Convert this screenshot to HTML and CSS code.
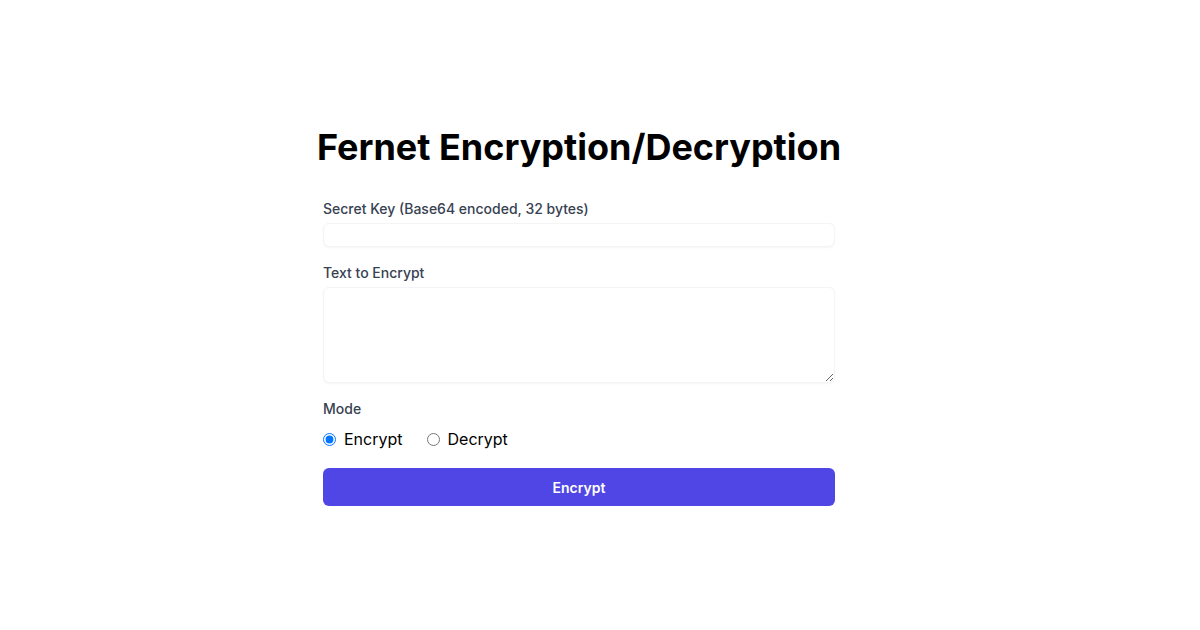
FILE: index.html
```html
<!DOCTYPE html>
<html>
<head>
<meta charset="utf-8">
<link rel="stylesheet" href="styles.css">
</head>
<body>
<main class="page">
  <div class="card">
    <h1 class="title">Fernet Encryption/Decryption</h1>
    <form class="form">
      <div class="field">
        <label class="label" for="key">Secret Key (Base64 encoded, 32 bytes)</label>
        <input class="input" id="key" type="text">
      </div>
      <div class="field">
        <label class="label" for="text">Text to Encrypt</label>
        <textarea class="textarea" id="text"></textarea>
      </div>
      <div class="field">
        <span class="label">Mode</span>
        <div class="radios">
          <label class="radio"><input type="radio" name="mode" checked><span>Encrypt</span></label>
          <label class="radio"><input type="radio" name="mode"><span>Decrypt</span></label>
        </div>
      </div>
      <button class="button" type="button">Encrypt</button>
    </form>
  </div>
</main>
</body>
</html>
```

FILE: styles.css
```css
* { box-sizing: border-box; }
html, body { margin: 0; padding: 0; background: #ffffff; }
body { font-family: Inter, "Noto Sans", sans-serif; }
.page {
  min-height: 630px;
  display: flex;
  justify-content: center;
  align-items: flex-start;
  padding: 127px 42px 0 0;
}
.card {
  width: 512px;
  display: flex;
  flex-direction: column;
}
.title {
  font-family: Inter, "Noto Sans", sans-serif;
  font-size: 36px;
  line-height: 40px;
  font-weight: 700;
  color: #000;
  margin: 0 -30px 32px -30px;
  text-align: center;
  white-space: nowrap;
}
.form { display: flex; flex-direction: column; gap: 16px; margin: 0; }
.field { display: flex; flex-direction: column; }
.label {
  font-size: 14px;
  line-height: 20px;
  font-weight: 500;
  color: #374151;
}
.input, .textarea {
  margin-top: 4px;
  width: 100%;
  border: 1px solid #f3f4f6;
  border-radius: 6px;
  box-shadow: 0 1px 2px rgba(0,0,0,0.04);
  background: #fff;
  font-family: inherit;
  font-size: 14px;
  outline: none;
}
.input { height: 24px; padding: 2px 8px; }
.textarea { height: 96px; padding: 6px 8px; resize: vertical; display: block; }
.radios {
  margin-top: 8px;
  display: flex;
  align-items: center;
  gap: 24px;
  height: 24px;
}
.radio {
  display: inline-flex;
  align-items: center;
  font-family: Inter, "Noto Sans", sans-serif;
  font-size: 16px;
  line-height: 24px;
  color: #000;
}
.radio input { margin: 0 8px 0 0; width: 13px; height: 13px; }
.button {
  height: 38px;
  width: 100%;
  border: none;
  border-radius: 6px;
  background: #4f46e5;
  color: #fff;
  font-family: Inter, sans-serif;
  font-weight: 600;
  font-size: 14px;
  margin-top: 1px;
}
```
